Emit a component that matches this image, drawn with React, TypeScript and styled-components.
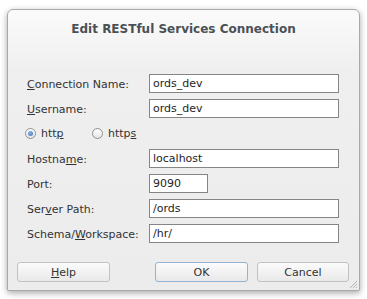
import React from 'react';
import styled, { createGlobalStyle } from 'styled-components';

const Global = createGlobalStyle`
  html, body {
    margin: 0;
    background: #ffffff;
  }
  body {
    font-family: "DejaVu Sans", "Liberation Sans", sans-serif;
  }
`;

const Page = styled.div`
  width: 367px;
  height: 299px;
  padding: 9px 7px 0 7px;
  box-sizing: border-box;
`;

const Window = styled.div`
  position: relative;
  width: 353px;
  height: 282px;
  box-sizing: border-box;
  border: 1px solid #a9a9a9;
  border-radius: 6px 6px 1px 1px;
  background: linear-gradient(180deg, #fbfbfb 0px, #efefef 60px, #ececec 100%);
  box-shadow: 0 2px 6px rgba(0, 0, 0, 0.35);
  display: flex;
  flex-direction: column;
`;

const Title = styled.div`
  height: 40px;
  padding-top: 12px;
  box-sizing: border-box;
  text-align: center;
  font-size: 12px;
  font-weight: bold;
  color: #4b5055;
`;

const Form = styled.div`
  display: grid;
  grid-template-columns: 122px 190px;
  grid-auto-rows: 19px;
  row-gap: 6px;
  margin-top: 24px;
  padding-left: 19px;
  align-items: center;
  font-size: 11px;
  color: #333333;
`;

const Label = styled.div`
  padding-top: 1px;
`;

const Field = styled.div<{ $width?: number }>`
  width: ${({ $width }) => ($width ? `${$width}px` : '100%')};
  height: 19px;
  box-sizing: border-box;
  border: 1px solid #858585;
  background: #ffffff;
  padding: 1px 0 0 3px;
  font-size: 11px;
  color: #1e1e1e;
  line-height: 15px;
`;

const RadioRow = styled.div`
  grid-column: 1 / span 2;
  display: flex;
  align-items: center;
  margin-left: -2px;
`;

const RadioOption = styled.label`
  display: flex;
  align-items: center;
  gap: 5px;
  width: 67px;
`;

const RadioCircle = styled.span<{ $checked?: boolean }>`
  width: 11px;
  height: 11px;
  box-sizing: border-box;
  border-radius: 50%;
  border: 1px solid #8e8e8e;
  background: linear-gradient(180deg, #ffffff, #e6e6e6);
  display: flex;
  align-items: center;
  justify-content: center;

  &::after {
    content: '';
    display: ${({ $checked }) => ($checked ? 'block' : 'none')};
    width: 5px;
    height: 5px;
    border-radius: 50%;
    background: radial-gradient(circle at 40% 35%, #8fb4e6, #3a6fb8);
  }
`;

const Mnemonic = styled.span`
  text-decoration: underline;
  text-underline-offset: 1px;
`;

const Buttons = styled.div`
  margin-top: auto;
  margin-bottom: 8px;
  padding: 0 10px 0 9px;
  display: flex;
  align-items: center;
  gap: 9px;
`;

const Button = styled.div<{ $default?: boolean; $width?: number }>`
  width: ${({ $width }) => $width ?? 93}px;
  height: 20px;
  box-sizing: border-box;
  border: 1px solid ${({ $default }) => ($default ? '#93b3d3' : '#c2c2c2')};
  border-radius: 3px;
  background: linear-gradient(180deg, #fbfbfb, #e9e9e9);
  display: flex;
  align-items: center;
  justify-content: center;
  font-size: 11px;
  color: #333333;
`;

const Spacer = styled.div`
  flex: 1;
`;

const Grip = styled.svg`
  position: absolute;
  right: 1px;
  bottom: 1px;
`;

export default function App() {
  return (
    <Page>
      <Global />
      <Window>
        <Title>Edit RESTful Services Connection</Title>
        <Form>
          <Label>
            <Mnemonic>C</Mnemonic>onnection Name:
          </Label>
          <Field>ords_dev</Field>
          <Label>
            <Mnemonic>U</Mnemonic>sername:
          </Label>
          <Field>ords_dev</Field>
          <RadioRow>
            <RadioOption>
              <RadioCircle $checked />
              <span>
                htt<Mnemonic>p</Mnemonic>
              </span>
            </RadioOption>
            <RadioOption>
              <RadioCircle />
              <span>
                http<Mnemonic>s</Mnemonic>
              </span>
            </RadioOption>
          </RadioRow>
          <Label>
            Hostna<Mnemonic>m</Mnemonic>e:
          </Label>
          <Field>localhost</Field>
          <Label>Port:</Label>
          <Field $width={59}>9090</Field>
          <Label>
            Ser<Mnemonic>v</Mnemonic>er Path:
          </Label>
          <Field>/ords</Field>
          <Label>
            Schema/<Mnemonic>W</Mnemonic>orkspace:
          </Label>
          <Field>/hr/</Field>
        </Form>
        <Buttons>
          <Button>
            <span>
              <Mnemonic>H</Mnemonic>elp
            </span>
          </Button>
          <Spacer />
          <Button $default>OK</Button>
          <Button $width={92}>Cancel</Button>
        </Buttons>
        <Grip width="10" height="10" viewBox="0 0 10 10">
          <path d="M9 2 L2 9 M9 5 L5 9 M9 8 L8 9" stroke="#b5b5b5" strokeWidth="1" />
        </Grip>
      </Window>
    </Page>
  );
}
